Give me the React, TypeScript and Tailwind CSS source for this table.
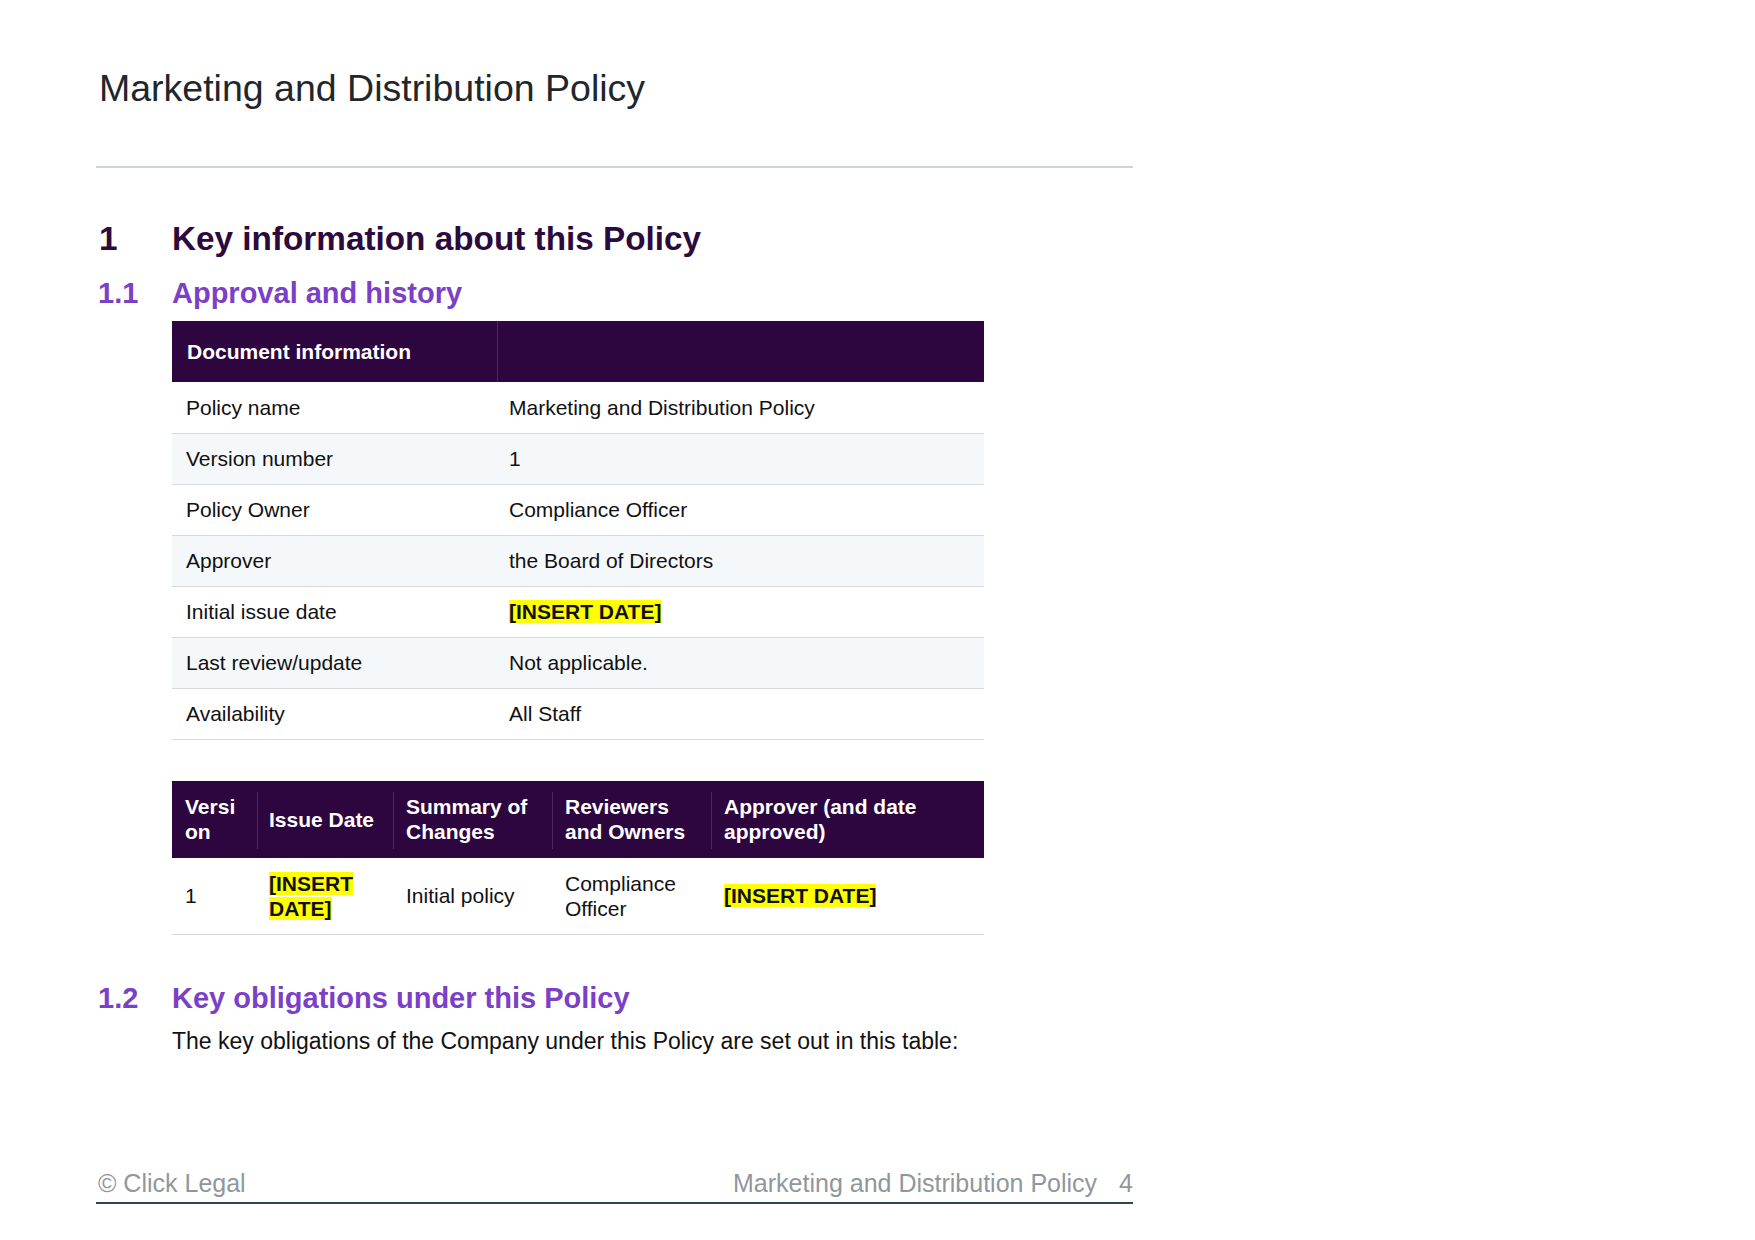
const docInfo: [string, string, boolean?][] = [
  ["Policy name", "Marketing and Distribution Policy"],
  ["Version number", "1"],
  ["Policy Owner", "Compliance Officer"],
  ["Approver", "the Board of Directors"],
  ["Initial issue date", "[INSERT DATE]", true],
  ["Last review/update", "Not applicable."],
  ["Availability", "All Staff"],
];

function Mark({ children }: { children: React.ReactNode }) {
  return (
    <span className="bg-[#ffff00] font-bold box-decoration-clone">{children}</span>
  );
}

function Heading2({ num, children }: { num: string; children: React.ReactNode }) {
  return (
    <h2 className="flex text-[29px] leading-[35px] font-bold text-[#7b3fc8]">
      <span className="w-[76px] shrink-0 pl-[2px]">{num}</span>
      <span>{children}</span>
    </h2>
  );
}

export default function App() {
  return (
    <div
      className="min-h-screen bg-white text-[#111111]"
      style={{ fontFamily: '"Liberation Sans", Arial, sans-serif' }}
    >
      <div className="ml-[96px] w-[1037px] pt-[65px]">
        <h1 className="pl-[3px] text-[37.5px] leading-[46px] text-[#1f262c]">
          Marketing and Distribution Policy
        </h1>
        <div className="mt-[55px] h-[2px] bg-[#cdd3d7]" />

        <h1 className="mt-[51px] flex text-[33.3px] leading-[40px] font-bold text-[#2d0a3e]">
          <span className="w-[76px] shrink-0 pl-[3px]">1</span>
          <span>Key information about this Policy</span>
        </h1>

        <div className="mt-[17px]">
          <Heading2 num="1.1">Approval and history</Heading2>
        </div>

        <div className="ml-[76px] mt-[10px] w-[812px] text-[21px]">
          <table className="w-full table-fixed border-collapse">
            <colgroup>
              <col className="w-[325px]" />
              <col />
            </colgroup>
            <thead>
              <tr className="h-[61px] bg-[#2e063f] text-white">
                <th className="border-r border-[#4a2a5c] pl-[15px] text-left font-bold">
                  Document information
                </th>
                <th />
              </tr>
            </thead>
            <tbody>
              {docInfo.map(([label, value, hl], i) => (
                <tr
                  key={label}
                  className={`h-[51px] border-b border-[#d6dadd] ${i % 2 === 1 ? "bg-[#f5f8fa]" : "bg-white"}`}
                >
                  <td className="pl-[14px]">{label}</td>
                  <td className="pl-[12px]">{hl ? <Mark>{value}</Mark> : value}</td>
                </tr>
              ))}
            </tbody>
          </table>

          <table className="mt-[41px] w-full table-fixed border-collapse leading-[25px]">
            <colgroup>
              <col className="w-[85px]" />
              <col className="w-[136px]" />
              <col className="w-[159px]" />
              <col className="w-[159px]" />
              <col />
            </colgroup>
            <thead>
              <tr className="h-[77px] bg-[#2e063f] text-left font-bold text-white">
                <th className="pl-[13px] pr-2 font-bold">
                  Versi
                  <br />
                  on
                </th>
                <th className="relative pl-[12px] font-bold before:absolute before:left-0 before:top-[11px] before:bottom-[9px] before:w-px before:bg-[#4a2a5c]">
                  Issue Date
                </th>
                <th className="relative pl-[13px] font-bold before:absolute before:left-0 before:top-[11px] before:bottom-[9px] before:w-px before:bg-[#4a2a5c]">
                  Summary of
                  <br />
                  Changes
                </th>
                <th className="relative pl-[13px] font-bold before:absolute before:left-0 before:top-[11px] before:bottom-[9px] before:w-px before:bg-[#4a2a5c]">
                  Reviewers
                  <br />
                  and Owners
                </th>
                <th className="relative pl-[13px] font-bold before:absolute before:left-0 before:top-[11px] before:bottom-[9px] before:w-px before:bg-[#4a2a5c]">
                  Approver (and date
                  <br />
                  approved)
                </th>
              </tr>
            </thead>
            <tbody>
              <tr className="h-[77px] border-b border-[#d6dadd]">
                <td className="pl-[13px]">1</td>
                <td className="pl-[12px]">
                  <Mark>
                    [INSERT
                    <br />
                    DATE]
                  </Mark>
                </td>
                <td className="pl-[13px]">Initial policy</td>
                <td className="pl-[13px]">
                  Compliance
                  <br />
                  Officer
                </td>
                <td className="pl-[13px]">
                  <Mark>[INSERT DATE]</Mark>
                </td>
              </tr>
            </tbody>
          </table>
        </div>

        <div className="mt-[46px]">
          <Heading2 num="1.2">Key obligations under this Policy</Heading2>
        </div>
        <p className="ml-[76px] mt-[12px] text-[23px] leading-[27px]">
          The key obligations of the Company under this Policy are set out in this table:
        </p>

        <footer className="mt-[113px]">
          <div className="flex items-baseline justify-between text-[25px] leading-[30px] text-[#8f979d]">
            <span className="pl-[2px]">© Click Legal</span>
            <span>
              Marketing and Distribution Policy<span className="ml-[22px]">4</span>
            </span>
          </div>
          <div className="mt-[4px] h-[2px] bg-[#2f4550]" />
        </footer>
      </div>
    </div>
  );
}
